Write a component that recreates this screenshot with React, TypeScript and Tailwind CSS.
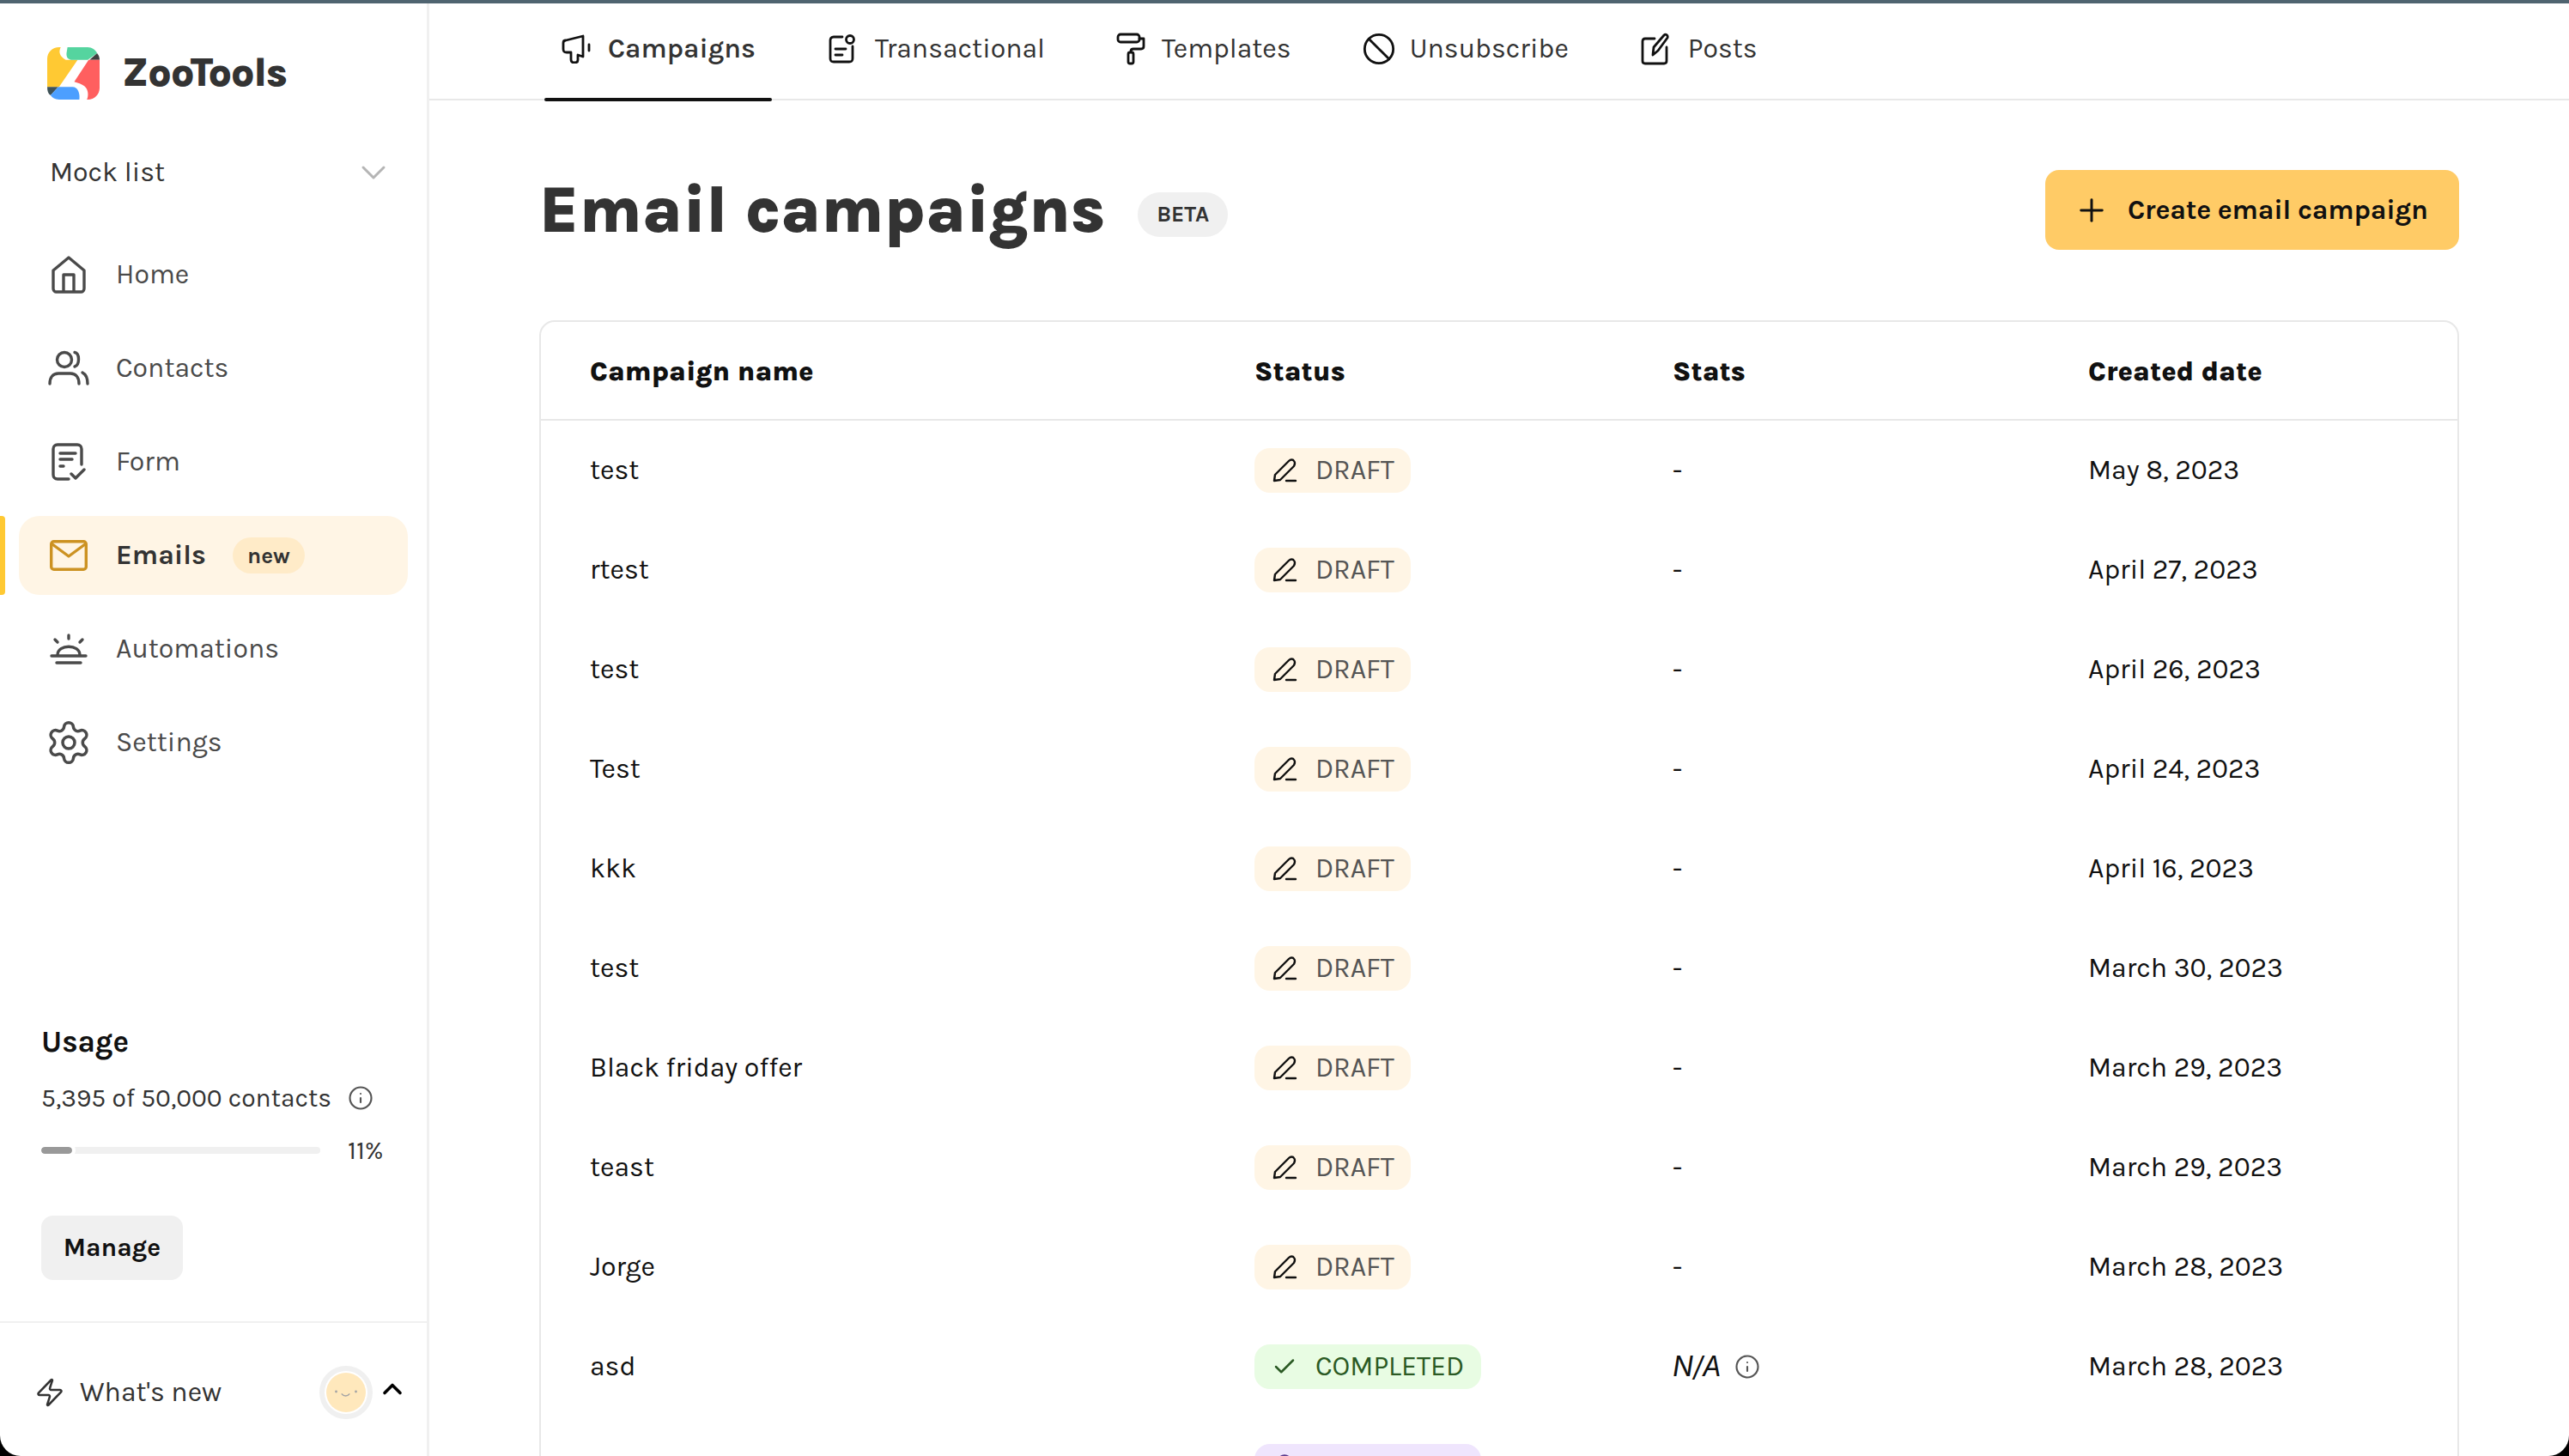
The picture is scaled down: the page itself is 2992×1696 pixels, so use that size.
import { Ban, Bell, Check, ChevronDown, ChevronUp, Info, Plus, Settings, Zap } from 'lucide-react'

const rows = [
  { name: 'test', date: 'May 8, 2023' },
  { name: 'rtest', date: 'April 27, 2023' },
  { name: 'test', date: 'April 26, 2023' },
  { name: 'Test', date: 'April 24, 2023' },
  { name: 'kkk', date: 'April 16, 2023' },
  { name: 'test', date: 'March 30, 2023' },
  { name: 'Black friday offer', date: 'March 29, 2023' },
  { name: 'teast', date: 'March 29, 2023' },
  { name: 'Jorge', date: 'March 28, 2023' },
]

function Logo() {
  return (
    <svg viewBox="0 0 62 62" className="w-[61px] h-[61px] shrink-0">
      <path d="M14 0H16C13 6 15 11 22 15H36L14 47H0V14C0 6 6 0 14 0Z" fill="#ffc933" />
      <path d="M24 0H48C53 0 57 3 59 7L48 15H30C25 15 22 12 23 6Z" fill="#55d49f" />
      <path d="M50 15L59 7C61 9 62 12 62 15Z" fill="#404040" />
      <path d="M49 15H62V48C62 56 56 62 48 62H47C49 58 49 50 44 46C41 44 36 42 32 41Z" fill="#ff5f5f" />
      <path d="M0 47H13L4 57C1 55 0 52 0 47Z" fill="#3f5257" />
      <path d="M13 47H30C36 47 39 54 38 62H14C9 62 6 60 4 57Z" fill="#4c9fff" />
    </svg>
  )
}

function Home2() {
  return (
    <svg viewBox="0 0 40 44" fill="none" stroke="#4a4a4a" strokeWidth="3.4" strokeLinejoin="round" className="w-10 h-11">
      <path d="M2 17L20 2L38 17V38C38 40 36.500 42 35 42H5C3.500 42 2 40 2 38Z" />
      <path d="M14 42V22H26V42" />
    </svg>
  )
}

function People() {
  return (
    <svg viewBox="0 0 48 42" fill="none" stroke="#4a4a4a" strokeWidth="3.400" strokeLinecap="round" className="w-12 h-[42px]">
      <circle cx="19" cy="11" r="8.500" />
      <path d="M31 2.500C37 3.500 37 17.500 31 19" />
      <path d="M2 39C2 31 6 27 12 27H26C32 27 36 31 36 39" />
      <path d="M40 26C44 28 46 33 46 39" />
    </svg>
  )
}

function FormIcon() {
  return (
    <svg viewBox="0 0 40 44" fill="none" stroke="#4a4a4a" strokeWidth="3.400" strokeLinecap="round" strokeLinejoin="round" className="w-10 h-11">
      <path d="M20 42H7C4 42 2 40 2 37V7C2 4 4 2 7 2H30C33 2 35 4 35 7V25" />
      <path d="M10 12H28M10 19H24M10 27H14" />
      <path d="M23 36L28 41L38 31" />
    </svg>
  )
}

function Mail() {
  return (
    <svg viewBox="0 0 44 36" fill="none" stroke="#cc9222" strokeWidth="3.400" strokeLinecap="round" strokeLinejoin="round" className="w-11 h-9">
      <rect x="1.700" y="1.700" width="40.600" height="32.600" rx="3" />
      <path d="M3 5L22 19L41 5" />
    </svg>
  )
}

function Sunrise() {
  return (
    <svg viewBox="0 0 44 36" fill="none" stroke="#4a4a4a" strokeWidth="3.400" strokeLinecap="round" className="w-11 h-9">
      <path d="M22 2V6M6 7L9 10M38 7L35 10" />
      <path d="M9 25C9 12 35 12 35 25" />
      <path d="M2 26H42M8 34H36" />
    </svg>
  )
}

function Megaphone() {
  return (
    <svg viewBox="0 0 34 34" fill="none" stroke="#111" strokeWidth="2.800" strokeLinecap="round" strokeLinejoin="round" className="w-[34px] h-[34px]">
      <path d="M2 10C2 8 3 7 5 7L25 2V26L19 24V30C19 32 17 33 15 33C12 33 11 31 11 29V21H6C3 21 2 20 2 17Z" />
      <path d="M32 12V19" />
    </svg>
  )
}

function Receipt() {
  return (
    <svg viewBox="0 0 32 34" fill="none" stroke="#111" strokeWidth="2.800" strokeLinecap="round" strokeLinejoin="round" className="w-8 h-[34px]">
      <path d="M16 3H6C3 3 2 5 2 7V28C2 31 3 32 6 32H24C27 32 28 31 28 28V14" />
      <circle cx="25" cy="6" r="4.500" />
      <path d="M8 17H20M8 24H16" />
    </svg>
  )
}

function Roller() {
  return (
    <svg viewBox="0 0 34 38" fill="none" stroke="#111" strokeWidth="2.800" strokeLinecap="round" strokeLinejoin="round" className="w-[34px] h-[38px]">
      <rect x="2" y="2" width="25" height="9" rx="3" />
      <path d="M27 7H32V16C32 18 31 19 29 19H20C18 19 17 20 17 22" />
      <rect x="14" y="23" width="6" height="13" rx="2" />
    </svg>
  )
}

function Compose() {
  return (
    <svg viewBox="0 0 34 38" fill="none" stroke="#111" strokeWidth="2.800" strokeLinecap="round" strokeLinejoin="round" className="w-[34px] h-[38px]">
      <path d="M16 7H5C3 7 2 8 2 10V33C2 35 3 36 5 36H27C29 36 30 35 30 33V17" />
      <path d="M14 26L15 17L27 3C29 1 32 3 31 6L20 21Z" />
    </svg>
  )
}

function Pen() {
  return (
    <svg viewBox="0 0 30 30" fill="none" stroke="#111" strokeWidth="2.400" strokeLinecap="round" strokeLinejoin="round" className="w-[30px] h-[30px]">
      <path d="M3 27L4 20L20 4C22 2 25 2 26 4C28 6 27 8 26 10L10 26Z" />
      <path d="M17 27H28" />
    </svg>
  )
}

function NavItem({ icon, label }: { icon: React.ReactNode; label: string }) {
  return (
    <a className="flex items-center h-[92px] mx-[24px] rounded-[24px]">
      <span className="w-[111px] flex items-center justify-center shrink-0">{icon}</span>
      <span className="text-[#4a4a4a]">{label}</span>
    </a>
  )
}

function DraftPill() {
  return (
    <span className="inline-flex items-center gap-[21px] h-[52px] w-[182px] pl-[20px] rounded-[18px] bg-[#fff5e5] text-[#555]">
      <Pen />
      DRAFT
    </span>
  )
}

export default function App() {
  return (
    <div className="h-screen overflow-hidden bg-black">
      <div className="h-full overflow-hidden rounded-b-[24px] bg-white text-[32px] font-['Karla','Inter','Liberation_Sans',sans-serif] text-[#111]">
        <div className="h-1 bg-[#4f6470]" />
        <div className="flex h-[1692px]">
          {/* Sidebar */}
          <aside className="w-[500px] shrink-0 border-r-[3px] border-[#f0f0f0] flex flex-col">
            <div className="flex items-center gap-[26px] pl-[55px] pt-[50px]">
              <Logo />
              <span className="text-[47px] leading-[62px] font-extrabold tracking-[-1px] text-[#333]">ZooTools</span>
            </div>
            <div className="flex items-center justify-between pl-[58px] pr-[38px] mt-[55px] h-[60px] text-[#333]">
              Mock list
              <ChevronDown className="w-12 h-12 text-[#b5b5b5]" strokeWidth={1.5} />
            </div>
            <nav className="mt-[43px] flex flex-col gap-[17px]">
              <NavItem icon={<Home2 />} label="Home" />
              <NavItem icon={<People />} label="Contacts" />
              <NavItem icon={<FormIcon />} label="Form" />
              <div className="relative">
                <span className="absolute left-0 top-0 w-[6px] h-[92px] rounded-r-[4px] bg-[#ffc933]" />
                <a className="flex items-center h-[92px] mx-[22px] pl-[2px] rounded-[24px] bg-[#fff5e5]">
                  <span className="w-[111px] flex items-center justify-center shrink-0"><Mail /></span>
                  <span className="font-bold text-[#333]">Emails</span>
                  <span className="ml-[31px] h-[42px] px-[17px] rounded-full bg-[#ffebc8] text-[26px] font-bold text-[#333] flex items-center">new</span>
                </a>
              </div>
              <NavItem icon={<Sunrise />} label="Automations" />
              <NavItem icon={<Settings className="w-[56px] h-[56px] text-[#4a4a4a]" strokeWidth={1.5} />} label="Settings" />
            </nav>
            <div className="mt-auto px-[48px]">
              <div className="h-[44px] flex items-center text-[35px] font-bold text-[#111]">Usage</div>
              <div className="mt-[23px] h-[40px] flex items-center gap-[19px] text-[30px] text-[#333]">
                5,395 of 50,000 contacts
                <Info className="w-[30px] h-[30px] text-[#555]" strokeWidth={1.7} />
              </div>
              <div className="mt-[21px] h-[40px] flex items-center gap-[32px]">
                <div className="w-[325px] h-2 shrink-0 rounded-full bg-[#f0f0f0]">
                  <div className="w-[36px] h-2 rounded-full bg-[#999] outline-[4px] outline-white" />
                </div>
                <span className="text-[30px] text-[#333]">11%</span>
              </div>
              <button className="mt-[56px] h-[75px] w-[165px] rounded-[14px] bg-[#f0f0f0] text-[30px] font-bold text-[#111]">Manage</button>
            </div>
            <div className="mt-[48px] h-[157px] shrink-0 border-t-[2px] border-[#f0f0f0] flex items-center pt-[6px] pl-[40px] pr-[22px]">
              <Zap className="w-[36px] h-[36px] text-[#333] mr-[17px]" strokeWidth={1.7} />
              <span className="text-[#333]">What's new</span>
              <span className="ml-auto w-[62px] h-[62px] rounded-full border-[6px] border-[#f0f0f0] p-[2px]">
                <span className="block w-full h-full rounded-full bg-[#ffe8bc]">
                  <svg viewBox="0 0 48 48" className="w-full h-full">
                    <circle cx="12" cy="23" r="1.500" fill="#a5a5a5" />
                    <circle cx="36" cy="23" r="1.500" fill="#a5a5a5" />
                    <path d="M19 26C21 29 26 29 28 26" stroke="#a5a5a5" strokeWidth="1.600" fill="none" strokeLinecap="round" />
                  </svg>
                </span>
              </span>
              <ChevronUp className="w-[36px] h-[36px] ml-[5px] -mt-[8px] text-black" strokeWidth={2.4} />
            </div>
          </aside>

          {/* Main */}
          <main className="flex-1 min-w-0">
            <div className="h-[113px] border-b-[2px] border-[#e8e8e8] pl-[134px] flex items-start">
              <a className="relative flex items-center gap-[20px] h-[112px] w-[265px] pl-[20px] pb-[6px] font-semibold text-[#333]">
                <Megaphone />
                Campaigns
                <span className="absolute left-0 right-0 bottom-[-2px] h-1 rounded-full bg-[#111]" />
              </a>
              <a className="flex items-center gap-[22px] h-[112px] ml-[66px] pb-[6px] text-[#333]"><Receipt />Transactional</a>
              <a className="flex items-center gap-[19px] h-[112px] ml-[83px] pb-[6px] text-[#333]"><Roller />Templates</a>
              <a className="flex items-center gap-[16px] h-[112px] ml-[82px] pb-[6px] text-[#333]"><Ban className="w-[40px] h-[40px] text-[#111]" strokeWidth={1.7} />Unsubscribe</a>
              <a className="flex items-center gap-[21px] h-[112px] ml-[84px] pb-[6px] text-[#333]"><Compose />Posts</a>
            </div>

            <div className="px-[128px]">
              <div className="flex items-center justify-between h-[93px] mt-[81px]">
                <div className="flex items-center gap-[38px]">
                  <h1 className="text-[76px] font-extrabold text-[#333] leading-none">Email campaigns</h1>
                  <span className="h-[52px] px-[22px] rounded-full bg-[#f0f0f0] text-[26px] font-bold text-[#333] flex items-center mt-[10px]">BETA</span>
                </div>
                <button className="flex items-center gap-[21px] w-[482px] h-[93px] pl-[33px] rounded-[16px] bg-[#ffcb66] font-bold tracking-[-0.2px] text-[#111]">
                  <Plus className="w-[42px] h-[42px]" strokeWidth={1.7} />
                  Create email campaign
                </button>
              </div>

              <div className="mt-[82px] border-[2px] border-[#e8e8e8] rounded-[18px] h-[1400px]">
                <div className="grid grid-cols-[774px_487px_484px_1fr] pl-[57px] pt-[2px] h-[115px] items-center border-b-[2px] border-[#e8e8e8] font-extrabold text-[#111]">
                  <span>Campaign name</span>
                  <span>Status</span>
                  <span>Stats</span>
                  <span>Created date</span>
                </div>
                {rows.map((row, i) => (
                  <div key={i} className="grid grid-cols-[774px_487px_484px_1fr] pl-[57px] h-[116px] items-center">
                    <span>{row.name}</span>
                    <span className="flex"><DraftPill /></span>
                    <span>-</span>
                    <span>{row.date}</span>
                  </div>
                ))}
                <div className="grid grid-cols-[774px_487px_484px_1fr] pl-[57px] h-[116px] items-center">
                  <span>asd</span>
                  <span className="flex">
                    <span className="inline-flex items-center gap-[21px] h-[52px] w-[264px] pl-[20px] rounded-[18px] bg-[#e8fce3] text-[#2b5a24]">
                      <Check className="w-[30px] h-[30px]" strokeWidth={2} />
                      COMPLETED
                    </span>
                  </span>
                  <span className="flex items-center gap-[15px]">
                    <span className="italic font-['Inter',sans-serif]">N/A</span>
                    <Info className="w-[30px] h-[30px] text-[#555]" strokeWidth={1.7} />
                  </span>
                  <span>March 28, 2023</span>
                </div>
                <div className="grid grid-cols-[774px_487px_484px_1fr] pl-[57px] h-[116px] items-center">
                  <span>Hello world</span>
                  <span className="flex">
                    <span className="inline-flex items-center gap-[21px] h-[52px] w-[264px] pl-[20px] rounded-[18px] bg-[#efe5fd] text-[#5b3a8c]">
                      <Bell className="w-[30px] h-[30px]" />
                      SCHEDULED
                    </span>
                  </span>
                  <span>-</span>
                  <span>March 27, 2023</span>
                </div>
              </div>
            </div>
          </main>
        </div>
      </div>
    </div>
  )
}
